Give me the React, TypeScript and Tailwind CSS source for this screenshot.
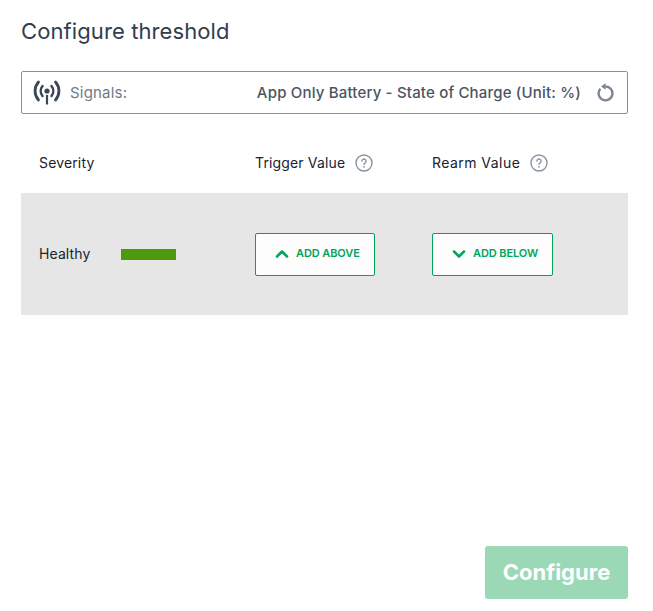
import { ChevronDown, ChevronUp } from 'lucide-react'

function HelpIcon() {
  return (
    <svg width="18" height="18" viewBox="0 0 18 18" fill="none" className="shrink-0">
      <circle cx="9" cy="9" r="8" stroke="#8a94a3" strokeWidth="1.4" />
      <path d="M6.9 7.1a2.1 2.1 0 1 1 3.2 1.8c-.7.4-1.1.8-1.1 1.5" stroke="#8a94a3" strokeWidth="1.4" strokeLinecap="round" />
      <circle cx="9" cy="12.8" r="0.9" fill="#8a94a3" />
    </svg>
  )
}

function SignalIcon() {
  return (
    <svg width="28" height="26" viewBox="0 0 28 26" fill="none" className="shrink-0">
      <path d="M5.5 2a13.5 13.5 0 0 0 0 18M22.5 2a13.5 13.5 0 0 1 0 18" stroke="#3b4656" strokeWidth="2.8" strokeLinecap="round" />
      <path d="M9.5 6a8 8 0 0 0 0 10M18.5 6a8 8 0 0 1 0 10" stroke="#3b4656" strokeWidth="2.5" strokeLinecap="round" />
      <circle cx="14" cy="11" r="2.6" fill="#3b4656" />
      <path d="M14 15v9.5" stroke="#3b4656" strokeWidth="2.2" />
    </svg>
  )
}

function ResetIcon() {
  return (
    <svg width="18" height="20" viewBox="0 0 18 20" fill="none" className="shrink-0">
      <path d="M4.4 5.8a6.9 6.9 0 1 0 5-2.3" stroke="#7b8594" strokeWidth="2.4" />
      <path d="M9.6 0.2v6.6L5 3.5z" fill="#7b8594" />
    </svg>
  )
}

function AddButton({ label, up }: { label: string; up?: boolean }) {
  return (
    <button className="flex h-[43px] w-full items-center rounded-[2px] border border-[#00a45a] bg-[#fdfdfd] pl-4 text-[11px] font-semibold tracking-[-0.1px] text-[#00a45a]">
      {up ? <ChevronUp size={20} strokeWidth={3} /> : <ChevronDown size={20} strokeWidth={3} />}
      <span className="ml-1">{label}</span>
    </button>
  )
}

export default function App() {
  return (
    <div className="flex h-[611px] w-[653px] flex-col bg-white pt-[18px] pr-[25px] pb-3 pl-[21px] font-['Inter',sans-serif]">
      <h1 className="text-[22px] leading-[26px] font-normal tracking-[0.1px] text-[#313d4e]">Configure threshold</h1>

      <div className="mt-[27px] flex h-[43px] items-center rounded-[2px] border border-[#8592a1] pr-[13px] pl-[11px]">
        <SignalIcon />
        <span className="ml-[9px] pt-[2px] text-[15px] tracking-[0.2px] text-[#6f7b8b]">Signals:</span>
        <span className="ml-auto pt-[2px] text-[15px] font-medium tracking-[0.18px] text-[#4a5463]">
          App Only Battery - State of Charge (Unit: %)
        </span>
        <span className="ml-[15px]">
          <ResetIcon />
        </span>
      </div>

      <div className="grid h-[79px] grid-cols-[216px_177px_1fr] items-center pt-[19px] pl-[18px] text-sm tracking-[0.15px] text-[#1a2230]">
        <span>Severity</span>
        <span className="flex items-center gap-[10px]">
          Trigger Value <HelpIcon />
        </span>
        <span className="flex items-center gap-[10px] tracking-[0.45px]">
          Rearm Value <HelpIcon />
        </span>
      </div>

      <div className="grid h-[122px] grid-cols-[216px_177px_1fr] items-center bg-[#e6e6e6] pl-[18px] text-sm tracking-[0.1px] text-[#1a2230]">
        <div className="flex items-center">
          <span className="w-[82px]">Healthy</span>
          <span className="h-[11px] w-[55px] bg-[#4f9a0c]" />
        </div>
        <div className="w-[120px]">
          <AddButton label="ADD ABOVE" up />
        </div>
        <div className="w-[121px]">
          <AddButton label="ADD BELOW" />
        </div>
      </div>

      <div className="mt-auto flex justify-end">
        <button className="h-[53px] w-[143px] rounded-[3px] bg-[#9bd9b6] text-[22px] font-bold text-white">Configure</button>
      </div>
    </div>
  )
}
